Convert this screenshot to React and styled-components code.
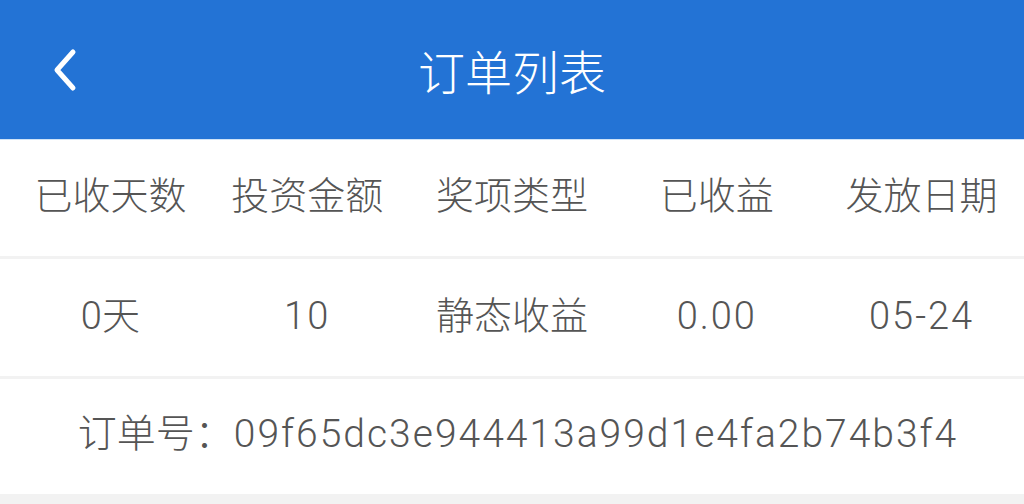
import styled, { createGlobalStyle } from 'styled-components';

const GlobalStyle = createGlobalStyle`
    html, body {
        margin: 0;
        padding: 0;
        background: #f2f2f2;
    }

    body {
        font-family: Roboto, "Noto Sans CJK SC", sans-serif;
        font-weight: 300;
        color: #555555;
    }
`

const Page = styled.div`
    width: 1024px;
    height: 504px;
    overflow: hidden;
    background: #f2f2f2;
`

const Header = styled.header`
    height: 139px;
    background: #2373d5;
    border-bottom: 1px solid #cfe3f7;
    display: flex;
    align-items: center;
    justify-content: center;
    position: relative;
`

const BackButton = styled.button`
    position: absolute;
    left: 44px;
    top: 46px;
    width: 40px;
    height: 48px;
    padding: 0;
    border: none;
    background: none;
    display: flex;
    align-items: center;
    justify-content: center;
    cursor: pointer;
`

const Title = styled.h1`
    margin: 0;
    font: 300 47px "Noto Sans CJK SC", sans-serif;
    color: #ffffff;
    line-height: 1;
`

const Row = styled.div`
    box-sizing: border-box;
    height: ${p => p.$height}px;
    padding-bottom: 4px;
    background: #ffffff;
    display: grid;
    grid-template-columns: repeat(5, 1fr);
    align-items: center;
    margin-bottom: ${p => p.$gap}px;
`

const Cell = styled.div`
    text-align: center;
    font-size: 38px;
    line-height: 1;
    white-space: nowrap;
    letter-spacing: ${p => (p.$spaced ? '2px' : '0')};

    &:first-child {
        padding-left: 16px;
    }
`

const OrderNo = styled.div`
    grid-column: 1 / -1;
    text-align: center;
    padding-left: 12px;
    font-size: 39px;
    line-height: 1;
    white-space: nowrap;

    span {
        letter-spacing: 2px;
    }
`

const ChevronLeft = () => (
    <svg width="30" height="44" viewBox="0 0 30 44" fill="none">
        <path d="M24 4 L8 22 L24 40" stroke="#fff" strokeWidth="5" strokeLinecap="round" strokeLinejoin="round" />
    </svg>
)

const headers = ['已收天数', '投资金额', '奖项类型', '已收益', '发放日期'];
const order = { days: '0天', amount: '10', kind: '静态收益', earned: '0.00', date: '05-24', id: '09f65dc3e944413a99d1e4fa2b74b3f4' };

const App = () => {
    return (
        <Page>
            <GlobalStyle />
            <Header>
                <BackButton aria-label="返回">
                    <ChevronLeft />
                </BackButton>
                <Title>订单列表</Title>
            </Header>
            <Row $height={116} $gap={3}>
                {headers.map(h => <Cell key={h}>{h}</Cell>)}
            </Row>
            <Row $height={117} $gap={3}>
                <Cell>{order.days}</Cell>
                <Cell $spaced>{order.amount}</Cell>
                <Cell>{order.kind}</Cell>
                <Cell $spaced>{order.earned}</Cell>
                <Cell $spaced>{order.date}</Cell>
            </Row>
            <Row $height={115} $gap={0}>
                <OrderNo>订单号：<span>{order.id}</span></OrderNo>
            </Row>
        </Page>
    )
}

export default App
